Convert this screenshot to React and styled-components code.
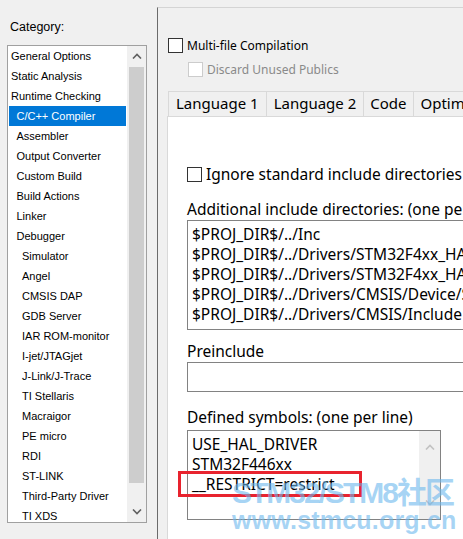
import React from "react";
import styled, { createGlobalStyle } from "styled-components";

const Global = createGlobalStyle`
  html, body {
    margin: 0;
    padding: 0;
    background: #f0f0f0;
  }
`;

const Page = styled.div`
  position: relative;
  width: 463px;
  height: 539px;
  overflow: hidden;
  display: flex;
  background: #f0f0f0;
  font-family: "Liberation Sans", Arial, sans-serif;
  color: #000;
`;

const Side = styled.div`
  width: 157px;
  flex: none;
  padding: 17px 0 0 7px;
  box-sizing: border-box;
  display: flex;
  flex-direction: column;
`;

const SideLabel = styled.div`
  font-size: 12.5px;
  line-height: 20px;
  padding-left: 3px;
  margin-bottom: 8px;
`;

const ListBox = styled.div`
  width: 140px;
  height: 478px;
  box-sizing: border-box;
  border: 1px solid #a0a0a0;
  background: #fff;
  display: flex;
`;

const Items = styled.div`
  flex: 1;
  display: flex;
  flex-direction: column;
`;

const Item = styled.div`
  height: 20px;
  line-height: 20px;
  font-size: 11px;
  margin: 0 1px;
  padding-left: ${(p) => 2 + p.$level * 5.5}px;
  background: ${(p) => (p.$selected ? "#0078d7" : "transparent")};
  color: ${(p) => (p.$selected ? "#fff" : "#000")};
  white-space: nowrap;
`;

const ScrollBar = styled.div`
  width: 19px;
  flex: none;
  background: #f0f0f0;
  display: flex;
  flex-direction: column;
`;

const ScrollBtn = styled.div`
  height: 20px;
  display: flex;
  align-items: center;
  justify-content: center;
  flex: none;
`;

const Thumb = styled.div`
  height: 416px;
  margin: 1px 2px 0;
  background: #cdcdcd;
  flex: none;
`;

const Track = styled.div`
  flex: 1;
`;

const Frame = styled.div`
  flex: 1;
  min-width: 0;
  margin-top: 7px;
  border-left: 1px solid #6b6b6b;
  border-top: 1px solid #d4d4d4;
  display: flex;
  flex-direction: column;
  font-family: "Noto Sans", "Liberation Sans", sans-serif;
`;

const CheckRow = styled.div`
  display: flex;
  align-items: center;
  gap: 4px;
  height: 16px;
  margin: ${(p) => p.$margin};
  font-size: ${(p) => p.$size || 12}px;
  color: ${(p) => (p.$disabled ? "#8a8a8a" : "#000")};
  white-space: nowrap;
`;

const Box = styled.span`
  width: 15px;
  height: 15px;
  box-sizing: border-box;
  flex: none;
  background: #fff;
  border: 1px solid ${(p) => (p.$disabled ? "#cccccc" : "#333")};
`;

const Tabs = styled.div`
  display: flex;
  margin: 14px 0 0 11px;
  height: 25px;
  flex: none;
`;

const Tab = styled.div`
  box-sizing: border-box;
  height: 25px;
  padding: 0 ${(p) => p.$pad || 7}px;
  border: 1px solid #d9d9d9;
  border-bottom: none;
  margin-left: -1px;
  background: #f0f0f0;
  font-size: 15px;
  line-height: 23px;
  white-space: nowrap;
  flex: none;
`;

const Panel = styled.div`
  flex: 1;
  margin-left: 9px;
  background: #fff;
  border-left: 1px solid #d9d9d9;
  border-top: 1px solid #d9d9d9;
  padding: 49px 0 0 19px;
  display: flex;
  flex-direction: column;
`;

const Label = styled.div`
  font-size: 15.5px;
  line-height: 20px;
  white-space: nowrap;
  margin: ${(p) => p.$margin};
`;

const TextBox = styled.div`
  position: relative;
  box-sizing: border-box;
  width: ${(p) => p.$width}px;
  height: ${(p) => p.$height}px;
  flex: none;
  border: 1px solid #828282;
  background: #fff;
  padding: 3px 0 0 4px;
  display: flex;
`;

const Lines = styled.div`
  flex: 1;
  display: flex;
  flex-direction: column;
`;

const Line = styled.div`
  font-size: 15.5px;
  line-height: 20px;
  height: 20px;
  white-space: nowrap;
`;

const InnerScroll = styled.div`
  width: 21px;
  margin-top: -3px;
  background: #f0f0f0;
  display: flex;
  flex-direction: column;
  justify-content: space-between;
  padding: 6px 0;
`;

const Highlight = styled.div`
  position: absolute;
  left: -10px;
  top: 40px;
  width: 184px;
  height: 26px;
  box-sizing: border-box;
  border: 3px solid #e8232e;
`;

const Watermark = styled.div`
  position: absolute;
  left: 232px;
  top: 478px;
  display: flex;
  flex-direction: column;
  color: rgba(108, 184, 238, 0.6);
  font-family: "Liberation Sans", "Noto Sans CJK SC", sans-serif;
  font-weight: bold;
  pointer-events: none;
`;

const MarkBig = styled.div`
  font-size: 30px;
  line-height: 29px;
  letter-spacing: -2px;
  white-space: nowrap;
`;

const MarkSmall = styled.div`
  font-size: 25px;
  line-height: 26px;
  letter-spacing: 0.2px;
  white-space: nowrap;
`;

function Chevron({ up, color = "#606060" }) {
  return (
    <svg width="10" height="6" viewBox="0 0 10 6">
      <polyline
        points={up ? "1,5.5 5,1.5 9,5.5" : "1,0.5 5,4.5 9,0.5"}
        fill="none"
        stroke={color}
        strokeWidth="1.6"
      />
    </svg>
  );
}

const categories = [
  ["General Options", 0],
  ["Static Analysis", 0],
  ["Runtime Checking", 0],
  ["C/C++ Compiler", 1],
  ["Assembler", 1],
  ["Output Converter", 1],
  ["Custom Build", 1],
  ["Build Actions", 1],
  ["Linker", 1],
  ["Debugger", 1],
  ["Simulator", 2],
  ["Angel", 2],
  ["CMSIS DAP", 2],
  ["GDB Server", 2],
  ["IAR ROM-monitor", 2],
  ["I-jet/JTAGjet", 2],
  ["J-Link/J-Trace", 2],
  ["TI Stellaris", 2],
  ["Macraigor", 2],
  ["PE micro", 2],
  ["RDI", 2],
  ["ST-LINK", 2],
  ["Third-Party Driver", 2],
  ["TI XDS", 2],
];

const includes = [
  "$PROJ_DIR$/../Inc",
  "$PROJ_DIR$/../Drivers/STM32F4xx_HAL_Driver/Inc",
  "$PROJ_DIR$/../Drivers/STM32F4xx_HAL_Driver/Inc/Legacy",
  "$PROJ_DIR$/../Drivers/CMSIS/Device/ST/STM32F4xx/Include",
  "$PROJ_DIR$/../Drivers/CMSIS/Include",
];

const symbols = ["USE_HAL_DRIVER", "STM32F446xx", "__RESTRICT=restrict"];

export default function App() {
  return (
    <Page>
      <Global />
      <Side>
        <SideLabel>Category:</SideLabel>
        <ListBox>
          <Items>
            {categories.map(([name, level]) => (
              <Item key={name} $level={level} $selected={name === "C/C++ Compiler"}>
                {name}
              </Item>
            ))}
          </Items>
          <ScrollBar>
            <ScrollBtn>
              <Chevron up />
            </ScrollBtn>
            <Thumb />
            <Track />
            <ScrollBtn>
              <Chevron />
            </ScrollBtn>
          </ScrollBar>
        </ListBox>
      </Side>

      <Frame>
        <CheckRow $margin="29px 0 0 10px">
          <Box />
          Multi-file Compilation
        </CheckRow>
        <CheckRow $margin="8px 0 0 30px" $disabled>
          <Box $disabled />
          Discard Unused Publics
        </CheckRow>
        <Tabs>
          <Tab>Language 1</Tab>
          <Tab>Language 2</Tab>
          <Tab $pad={6}>Code</Tab>
          <Tab>Optimizations</Tab>
        </Tabs>
        <Panel>
          <CheckRow $margin="0" $size={15.5}>
            <Box />
            Ignore standard include directories
          </CheckRow>
          <Label $margin="17px 0 1px">Additional include directories: (one per line)</Label>
          <TextBox $width={420} $height={110}>
            <Lines>
              {includes.map((l) => (
                <Line key={l}>{l}</Line>
              ))}
            </Lines>
          </TextBox>
          <Label $margin="11px 0 1px">Preinclude</Label>
          <TextBox $width={420} $height={30} />
          <Label $margin="15px 0 3px">Defined symbols: (one per line)</Label>
          <TextBox $width={254} $height={90}>
            <Lines>
              {symbols.map((l) => (
                <Line key={l}>{l}</Line>
              ))}
            </Lines>
            <InnerScroll>
              <ScrollBtn>
                <Chevron up color="#c2c2c2" />
              </ScrollBtn>
              <ScrollBtn>
                <Chevron color="#c2c2c2" />
              </ScrollBtn>
            </InnerScroll>
            <Highlight />
          </TextBox>
        </Panel>
      </Frame>

      <Watermark>
        <MarkBig>STM32/STM8社区</MarkBig>
        <MarkSmall>www.stmcu.org.cn</MarkSmall>
      </Watermark>
    </Page>
  );
}
